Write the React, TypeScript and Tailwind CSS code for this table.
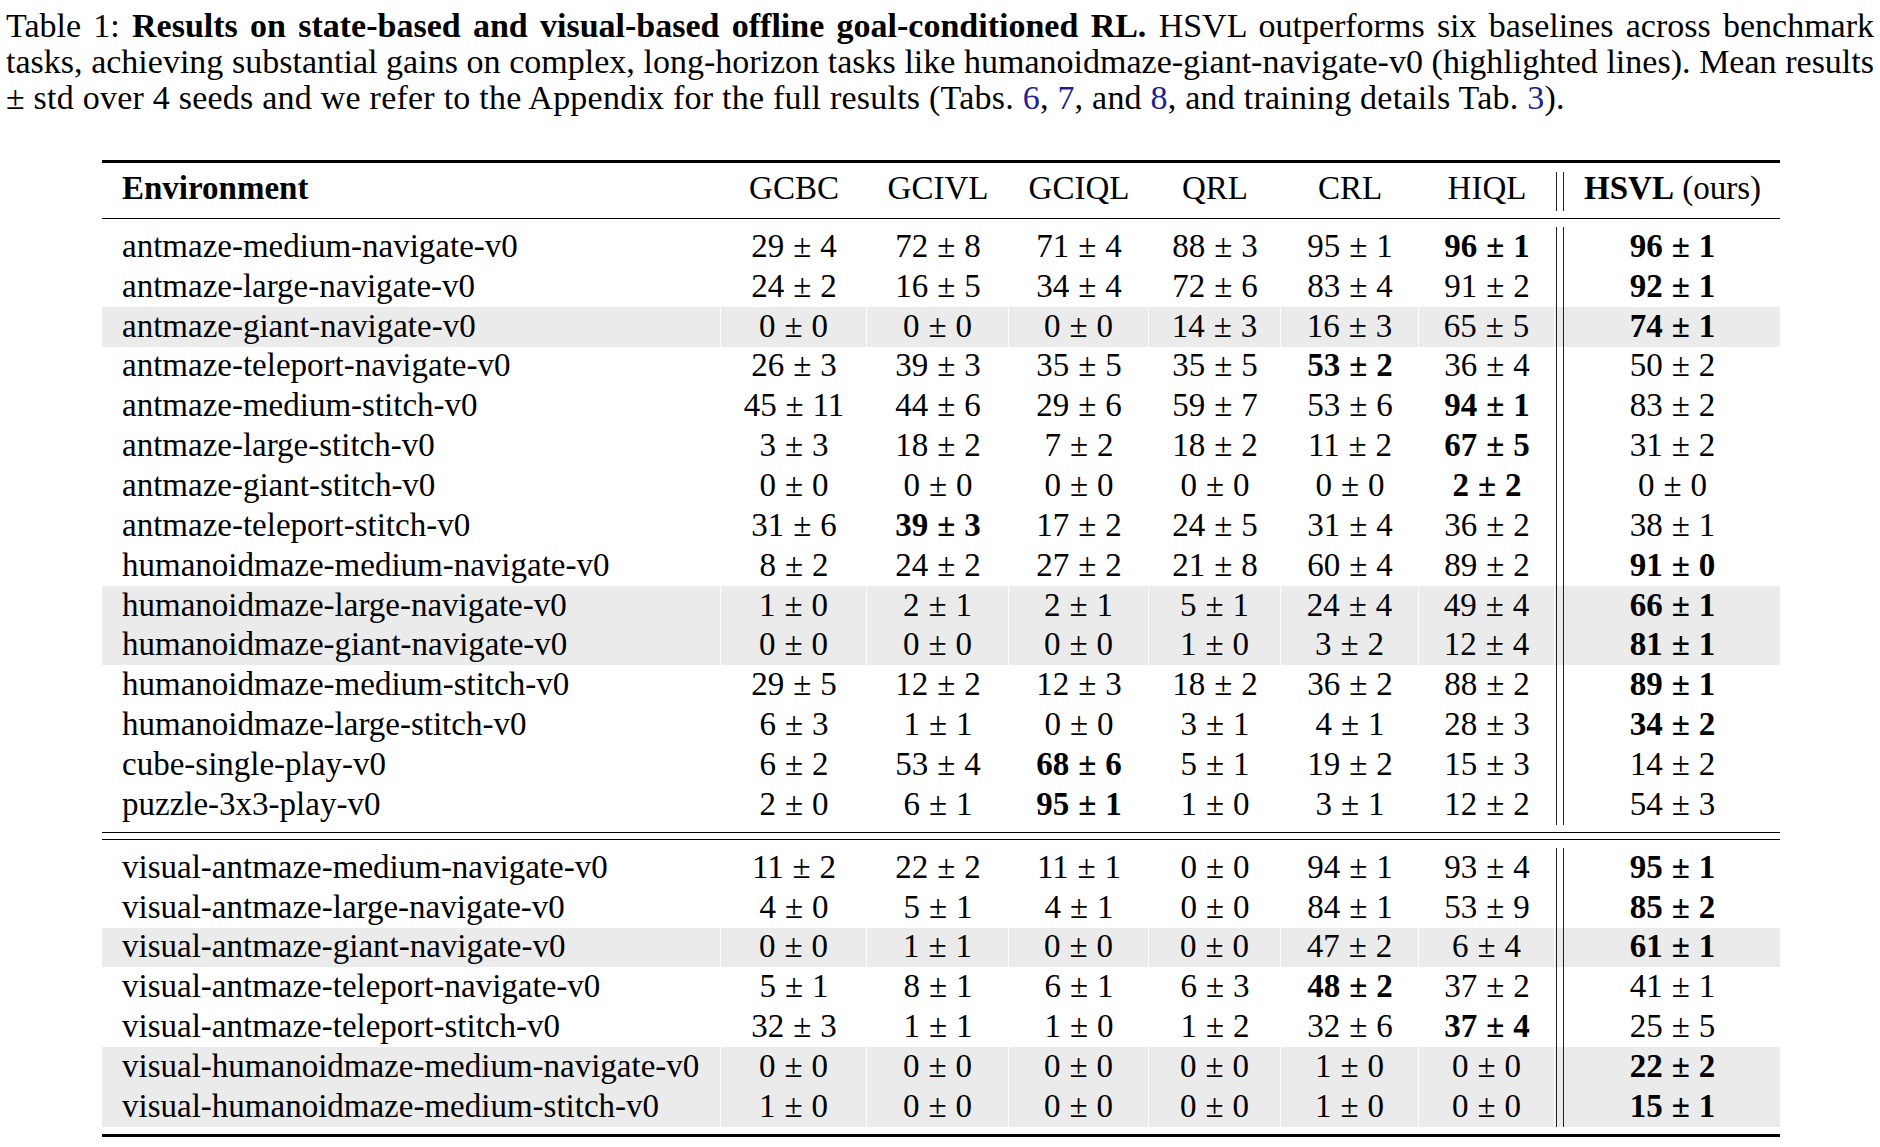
import React from 'react';

type Row = { env: string; vals: string[]; hl?: boolean };

// "*" marks a bold (best) entry
const stateRows: Row[] = [
  { env: 'antmaze-medium-navigate-v0', vals: ['29±4', '72±8', '71±4', '88±3', '95±1', '*96±1', '*96±1'] },
  { env: 'antmaze-large-navigate-v0', vals: ['24±2', '16±5', '34±4', '72±6', '83±4', '91±2', '*92±1'] },
  { env: 'antmaze-giant-navigate-v0', vals: ['0±0', '0±0', '0±0', '14±3', '16±3', '65±5', '*74±1'], hl: true },
  { env: 'antmaze-teleport-navigate-v0', vals: ['26±3', '39±3', '35±5', '35±5', '*53±2', '36±4', '50±2'] },
  { env: 'antmaze-medium-stitch-v0', vals: ['45±11', '44±6', '29±6', '59±7', '53±6', '*94±1', '83±2'] },
  { env: 'antmaze-large-stitch-v0', vals: ['3±3', '18±2', '7±2', '18±2', '11±2', '*67±5', '31±2'] },
  { env: 'antmaze-giant-stitch-v0', vals: ['0±0', '0±0', '0±0', '0±0', '0±0', '*2±2', '0±0'] },
  { env: 'antmaze-teleport-stitch-v0', vals: ['31±6', '*39±3', '17±2', '24±5', '31±4', '36±2', '38±1'] },
  { env: 'humanoidmaze-medium-navigate-v0', vals: ['8±2', '24±2', '27±2', '21±8', '60±4', '89±2', '*91±0'] },
  { env: 'humanoidmaze-large-navigate-v0', vals: ['1±0', '2±1', '2±1', '5±1', '24±4', '49±4', '*66±1'], hl: true },
  { env: 'humanoidmaze-giant-navigate-v0', vals: ['0±0', '0±0', '0±0', '1±0', '3±2', '12±4', '*81±1'], hl: true },
  { env: 'humanoidmaze-medium-stitch-v0', vals: ['29±5', '12±2', '12±3', '18±2', '36±2', '88±2', '*89±1'] },
  { env: 'humanoidmaze-large-stitch-v0', vals: ['6±3', '1±1', '0±0', '3±1', '4±1', '28±3', '*34±2'] },
  { env: 'cube-single-play-v0', vals: ['6±2', '53±4', '*68±6', '5±1', '19±2', '15±3', '14±2'] },
  { env: 'puzzle-3x3-play-v0', vals: ['2±0', '6±1', '*95±1', '1±0', '3±1', '12±2', '54±3'] },
];

const visualRows: Row[] = [
  { env: 'visual-antmaze-medium-navigate-v0', vals: ['11±2', '22±2', '11±1', '0±0', '94±1', '93±4', '*95±1'] },
  { env: 'visual-antmaze-large-navigate-v0', vals: ['4±0', '5±1', '4±1', '0±0', '84±1', '53±9', '*85±2'] },
  { env: 'visual-antmaze-giant-navigate-v0', vals: ['0±0', '1±1', '0±0', '0±0', '47±2', '6±4', '*61±1'], hl: true },
  { env: 'visual-antmaze-teleport-navigate-v0', vals: ['5±1', '8±1', '6±1', '6±3', '*48±2', '37±2', '41±1'] },
  { env: 'visual-antmaze-teleport-stitch-v0', vals: ['32±3', '1±1', '1±0', '1±2', '32±6', '*37±4', '25±5'] },
  { env: 'visual-humanoidmaze-medium-navigate-v0', vals: ['0±0', '0±0', '0±0', '0±0', '1±0', '0±0', '*22±2'], hl: true },
  { env: 'visual-humanoidmaze-medium-stitch-v0', vals: ['1±0', '0±0', '0±0', '0±0', '1±0', '0±0', '*15±1'], hl: true },
];

const cols = 'grid grid-cols-[619px_146px_142px_140px_132px_138px_136px_10px_215px]';

function Num({ v }: { v: string }) {
  const bold = v.startsWith('*');
  const [a, b] = v.replace('*', '').split('±');
  return (
    <span className={bold ? 'font-bold' : ''}>
      {a}
      <span className="mx-[0.27em]">±</span>
      {b}
    </span>
  );
}

function Bars() {
  return <div className="mx-[1px] h-full w-[8px] border-x-[1.3px] border-[#222]" />;
}

function TableRow({ row }: { row: Row }) {
  const cell = row.hl
    ? 'flex items-center justify-center pb-[1px] bg-[#ebebeb] border-r border-white'
    : 'flex items-center justify-center pb-[1px]';
  return (
    <div className={`${cols} grid-rows-[39.85px] h-[39.85px]`}>
      <div
        className={
          row.hl
            ? 'flex items-center pl-[20px] pb-[1px] bg-[#ebebeb] border-r border-white'
            : 'flex items-center pl-[20px] pb-[1px]'
        }
      >
        {row.env}
      </div>
      {row.vals.slice(0, 6).map((v, i) => (
        <div key={i} className={cell}>
          <Num v={v} />
        </div>
      ))}
      <div className={row.hl ? 'flex bg-[#ebebeb]' : 'flex'}>
        <Bars />
      </div>
      <div
        className={
          row.hl
            ? 'flex items-center justify-center pb-[1px] bg-[#ebebeb]'
            : 'flex items-center justify-center pb-[1px]'
        }
      >
        <Num v={row.vals[6]} />
      </div>
    </div>
  );
}

function Ref({ n }: { n: string }) {
  return <span className="text-[#1f1f8f]">{n}</span>;
}

export default function App() {
  return (
    <div className="w-[1880px] h-[1147px] bg-white text-black font-['Liberation_Serif',serif] overflow-hidden">
      <div className="pt-[8px] pl-[6px] w-[1874px] text-[34px] leading-[36px]">
        <div className="whitespace-nowrap text-justify [text-align-last:justify]">
          Table 1: <b>Results on state-based and visual-based offline goal-conditioned RL.</b> HSVL outperforms six
          baselines across benchmark
        </div>
        <div className="whitespace-nowrap text-justify [text-align-last:justify]">
          tasks, achieving substantial gains on complex, long-horizon tasks like humanoidmaze-giant-navigate-v0
          (highlighted lines). Mean results
        </div>
        <div className="whitespace-nowrap tracking-[0.23px]">
          ± std over 4 seeds and we refer to the Appendix for the full results (Tabs. <Ref n="6" />, <Ref n="7" />,
          and <Ref n="8" />, and training details Tab. <Ref n="3" />).
        </div>
      </div>

      <div className="ml-[102px] mt-[44px] w-[1678px] text-[33px] leading-[33px]">
        <div className="h-[3px] bg-black" />
        <div className={`${cols} grid-rows-[39px] h-[55px] pt-[9px] pb-[7px]`}>
          <div className="flex items-center pl-[20px] pb-[7px] font-bold">Environment</div>
          {['GCBC', 'GCIVL', 'GCIQL', 'QRL', 'CRL', 'HIQL'].map((h) => (
            <div key={h} className="flex items-center justify-center pb-[7px]">
              {h}
            </div>
          ))}
          <div className="flex">
            <Bars />
          </div>
          <div className="flex items-center justify-center pb-[7px]">
            <b>HSVL</b>
            <span className="ml-[0.25em]">(ours)</span>
          </div>
        </div>
        <div className="h-[1.4px] bg-black" />
        <div className="h-[7.6px]" />
        {stateRows.map((r) => (
          <TableRow key={r.env} row={r} />
        ))}
        <div className="h-[7px]" />
        <div className="h-[1.4px] bg-black" />
        <div className="h-[6px]" />
        <div className="h-[1.4px] bg-black" />
        <div className="h-[7.4px]" />
        {visualRows.map((r) => (
          <TableRow key={r.env} row={r} />
        ))}
        <div className="h-[7px]" />
        <div className="h-[3px] bg-black" />
      </div>
    </div>
  );
}
